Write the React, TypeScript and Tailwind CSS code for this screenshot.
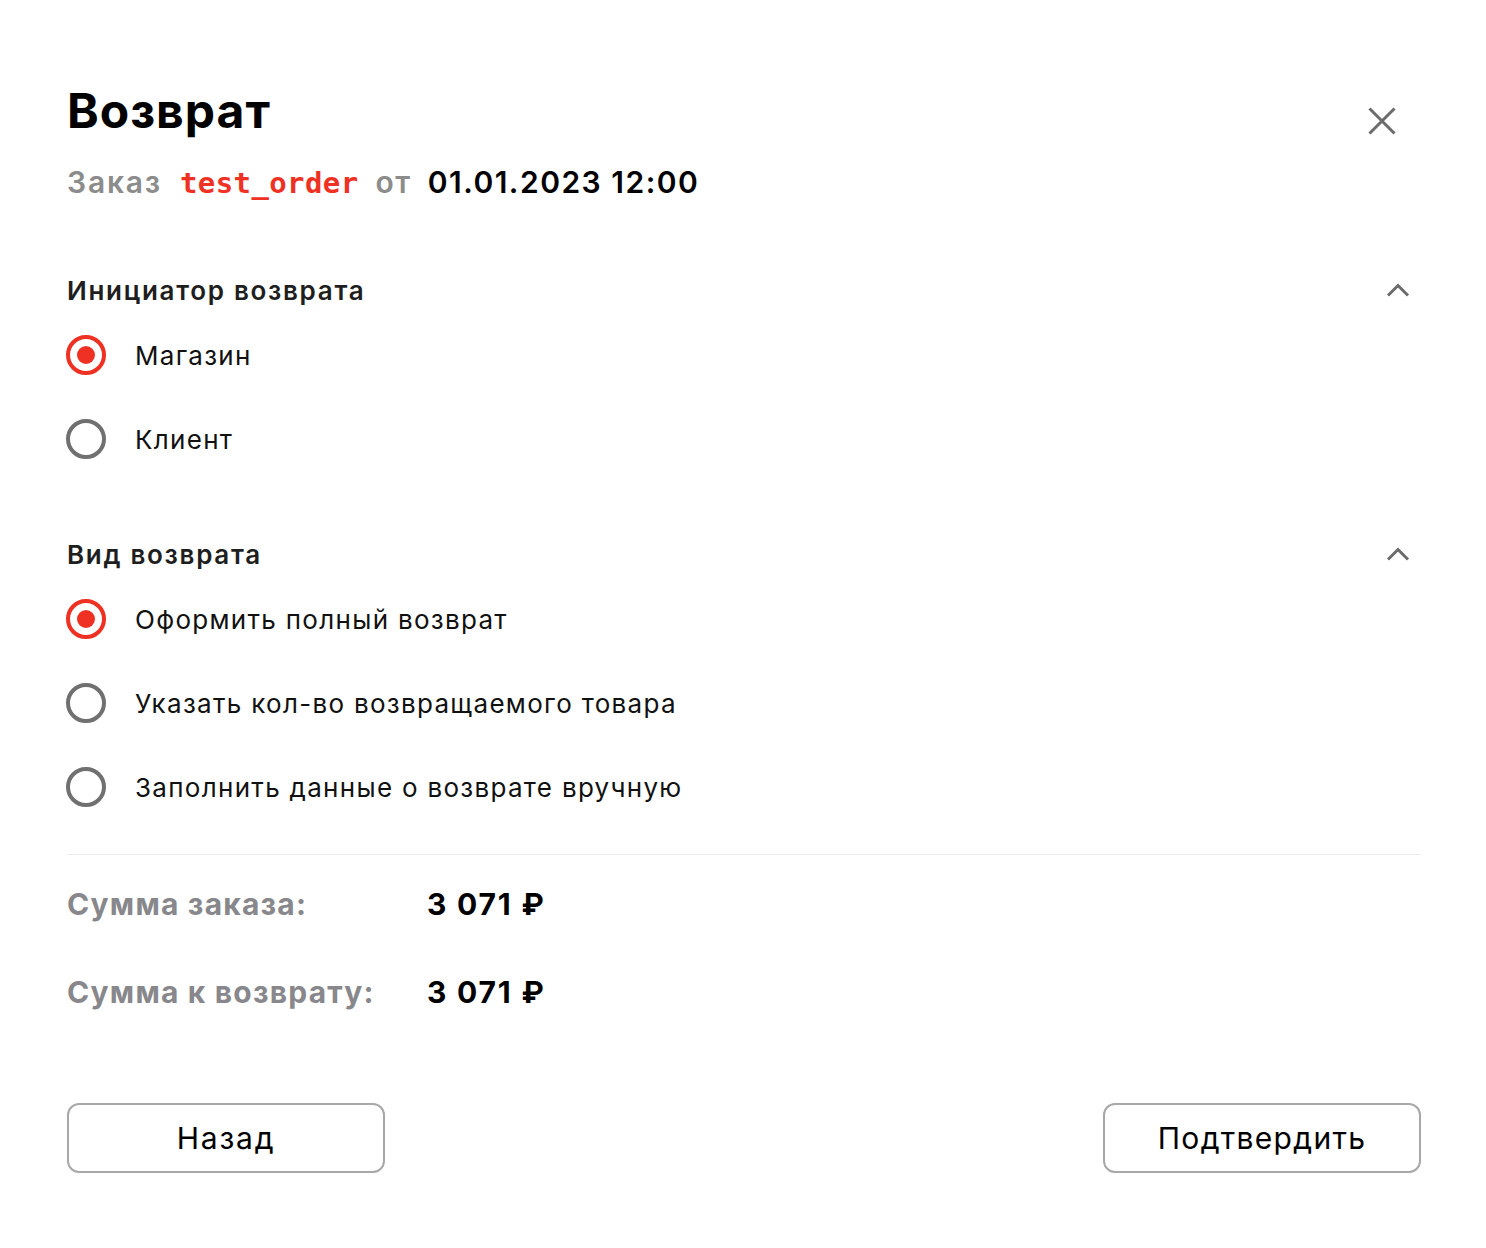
import React, { useState } from 'react';

const initiators = ['Магазин', 'Клиент'];
const kinds = [
  'Оформить полный возврат',
  'Указать кол-во возвращаемого товара',
  'Заполнить данные о возврате вручную',
];

const Radio = ({ checked }: { checked: boolean }) => (
  <span
    className={`-ml-px flex h-[40px] w-[40px] shrink-0 items-center justify-center rounded-full border-[4px] ${
      checked ? 'border-[#ef3124]' : 'border-[#707070]'
    }`}
  >
    {checked && <span className="h-[18px] w-[18px] rounded-full bg-[#ef3124]" />}
  </span>
);

const Chevron = () => (
  <svg width="24" height="14" viewBox="0 0 24 14" fill="none" className="mr-[11px] -mt-[2px]">
    <path d="M2 12.5L12 2.5L22 12.5" stroke="#6b6b6b" strokeWidth="3" />
  </svg>
);

const Section = ({
  title,
  options,
  value,
  onChange,
}: {
  title: string;
  options: string[];
  value: number;
  onChange: (i: number) => void;
}) => (
  <div>
    <div className="flex h-[43px] items-center justify-between pb-[2px]">
      <h3 className="text-[26px] font-semibold tracking-[1.7px] text-[#1e1e1e]">{title}</h3>
      <Chevron />
    </div>
    {options.map((opt, i) => (
      <button
        key={opt}
        onClick={() => onChange(i)}
        className="flex h-[84px] w-full items-center gap-[29px] text-left"
      >
        <Radio checked={value === i} />
        <span className="text-[26px] tracking-[1.3px] text-[#111]">{opt}</span>
      </button>
    ))}
  </div>
);

export default function App() {
  const [initiator, setInitiator] = useState(0);
  const [kind, setKind] = useState(0);

  return (
    <div
      className="min-h-screen w-[1486px] bg-white px-[67px] pt-[81px] pr-[65px]"
      style={{ fontFamily: 'Inter, "Noto Sans", sans-serif' }}
    >
      <div className="flex items-start justify-between">
        <div>
          <h1 className="text-[48px] font-bold leading-[60px] tracking-[1px] text-black">Возврат</h1>
          <p className="mt-[21px] flex items-baseline text-[30px] leading-[40px]">
            <span className="font-semibold tracking-[1.8px] text-[#8c8c8c]">Заказ</span>
            <span
              className="ml-[18px] text-[29px] font-bold tracking-[0.4px] text-[#ef3124]"
              style={{ fontFamily: '"DejaVu Sans Mono", "Liberation Mono", monospace' }}
            >
              test_order
            </span>
            <span className="ml-[17px] font-semibold tracking-[1.5px] text-[#8c8c8c]">от</span>
            <span className="ml-[16px] font-semibold tracking-[1.5px] text-black">01.01.2023 12:00</span>
          </p>
        </div>
        <button className="mt-[26px] mr-[25px]">
          <svg width="28" height="28" viewBox="0 0 28 28" fill="none">
            <path d="M1.5 1.5L26.5 26.5M26.5 1.5L1.5 26.5" stroke="#6b6b6b" strokeWidth="3" />
          </svg>
        </button>
      </div>

      <div className="mt-[67px]">
        <Section title="Инициатор возврата" options={initiators} value={initiator} onChange={setInitiator} />
      </div>
      <div className="mt-[53px]">
        <Section title="Вид возврата" options={kinds} value={kind} onChange={setKind} />
      </div>

      <div className="mt-[25px] h-px bg-[#ececec]" />

      <div className="mt-[5px]">
        {[
          ['Сумма заказа:', '3 071 ₽'],
          ['Сумма к возврату:', '3 071 ₽'],
        ].map(([label, val]) => (
          <div key={label} className="flex h-[88px] items-center text-[30px] font-bold">
            <span className="w-[360px] tracking-[1.2px] text-[#88888c]">{label}</span>
            <span className="tracking-[1.8px] text-black">{val}</span>
          </div>
        ))}
      </div>

      <div className="mt-[67px] flex justify-between">
        <button className="h-[70px] w-[318px] rounded-[12px] border-2 border-[#a8a8a8] text-[30px] tracking-[1.8px] text-black">
          Назад
        </button>
        <button className="h-[70px] w-[318px] rounded-[12px] border-2 border-[#a8a8a8] text-[30px] tracking-[1.3px] text-black">
          Подтвердить
        </button>
      </div>
    </div>
  );
}
